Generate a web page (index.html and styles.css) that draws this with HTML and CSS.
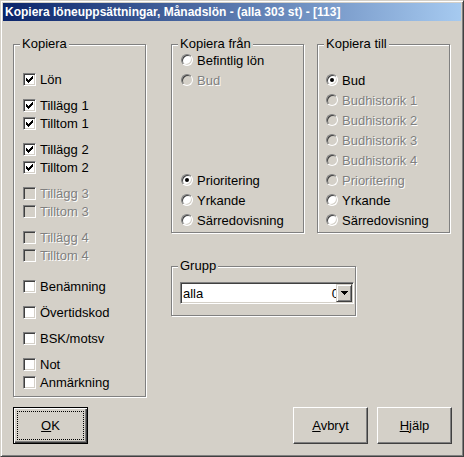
FILE: index.html
```html
<!DOCTYPE html>
<html lang="sv">
<head>
  <meta charset="UTF-8" />
  <title>Kopiera löneuppsättningar</title>
  <link rel="stylesheet" href="styles.css">
</head>
<body>
  <div class="window">
    <div class="titlebar">Kopiera löneuppsättningar, Månadslön - (alla 303 st) - [113]</div>
    <div class="dialog">
      <div class="groups">
        <fieldset class="group kopiera">
          <legend>Kopiera</legend>
          <div class="set">
            <label class="check"><span class="box"><svg width="7" height="7" viewBox="0 0 7 7"><path d="M0 2h1v3H0zM1 3h1v3H1zM2 4h1v3H2zM3 3h1v3H3zM4 2h1v3H4zM5 1h1v3H5zM6 0h1v3H6z"/></svg></span>Lön</label>
          </div>
          <div class="set">
            <label class="check"><span class="box"><svg width="7" height="7" viewBox="0 0 7 7"><path d="M0 2h1v3H0zM1 3h1v3H1zM2 4h1v3H2zM3 3h1v3H3zM4 2h1v3H4zM5 1h1v3H5zM6 0h1v3H6z"/></svg></span>Tillägg 1</label>
            <label class="check"><span class="box"><svg width="7" height="7" viewBox="0 0 7 7"><path d="M0 2h1v3H0zM1 3h1v3H1zM2 4h1v3H2zM3 3h1v3H3zM4 2h1v3H4zM5 1h1v3H5zM6 0h1v3H6z"/></svg></span>Tilltom 1</label>
          </div>
          <div class="set">
            <label class="check"><span class="box"><svg width="7" height="7" viewBox="0 0 7 7"><path d="M0 2h1v3H0zM1 3h1v3H1zM2 4h1v3H2zM3 3h1v3H3zM4 2h1v3H4zM5 1h1v3H5zM6 0h1v3H6z"/></svg></span>Tillägg 2</label>
            <label class="check"><span class="box"><svg width="7" height="7" viewBox="0 0 7 7"><path d="M0 2h1v3H0zM1 3h1v3H1zM2 4h1v3H2zM3 3h1v3H3zM4 2h1v3H4zM5 1h1v3H5zM6 0h1v3H6z"/></svg></span>Tilltom 2</label>
          </div>
          <div class="set">
            <label class="check disabled"><span class="box"></span>Tillägg 3</label>
            <label class="check disabled"><span class="box"></span>Tilltom 3</label>
          </div>
          <div class="set">
            <label class="check disabled"><span class="box"></span>Tillägg 4</label>
            <label class="check disabled"><span class="box"></span>Tilltom 4</label>
          </div>
          <div class="set spaced">
            <label class="check"><span class="box"></span>Benämning</label>
          </div>
          <div class="set">
            <label class="check"><span class="box"></span>Övertidskod</label>
          </div>
          <div class="set">
            <label class="check"><span class="box"></span>BSK/motsv</label>
          </div>
          <div class="set">
            <label class="check"><span class="box"></span>Not</label>
            <label class="check"><span class="box"></span>Anmärkning</label>
          </div>
        </fieldset>

        <div class="side">
          <div class="pair">
            <fieldset class="group fran">
              <legend>Kopiera från</legend>
              <div class="rows">
                <label class="radio"><span class="dot"></span>Befintlig lön</label>
                <label class="radio disabled"><span class="dot"></span>Bud</label>
              </div>
              <div class="rows later">
                <label class="radio"><span class="dot on"></span>Prioritering</label>
                <label class="radio"><span class="dot"></span>Yrkande</label>
                <label class="radio"><span class="dot"></span>Särredovisning</label>
              </div>
            </fieldset>
            <fieldset class="group till">
              <legend>Kopiera till</legend>
              <div class="rows">
                <label class="radio"><span class="dot on"></span>Bud</label>
                <label class="radio disabled"><span class="dot"></span>Budhistorik 1</label>
                <label class="radio disabled"><span class="dot"></span>Budhistorik 2</label>
                <label class="radio disabled"><span class="dot"></span>Budhistorik 3</label>
                <label class="radio disabled"><span class="dot"></span>Budhistorik 4</label>
                <label class="radio disabled"><span class="dot"></span>Prioritering</label>
                <label class="radio"><span class="dot"></span>Yrkande</label>
                <label class="radio"><span class="dot"></span>Särredovisning</label>
              </div>
            </fieldset>
          </div>

          <fieldset class="group grupp">
            <legend>Grupp</legend>
            <div class="combo">
              <div class="combo-text"><span>alla</span><span class="cut">0</span></div>
              <span class="combo-btn"><svg width="7" height="4" viewBox="0 0 7 4"><path d="M0 0h7v1H0zM1 1h5v1H1zM2 2h3v1H2zM3 3h1v1H3z"/></svg></span>
            </div>
          </fieldset>
        </div>
      </div>

      <div class="buttons">
        <button class="btn default"><span class="focus"><u>O</u>K</span></button>
        <button class="btn push-right"><u>A</u>vbryt</button>
        <button class="btn"><u>H</u>jälp</button>
      </div>
    </div>
  </div>
</body>
</html>
```

FILE: styles.css
```css
body {
  margin: 0;
  background: #d4d0c8;
  font-family: "Liberation Sans", Arial, sans-serif;
  font-size: 13px;
  color: #000;
}
.window {
  width: 464px;
  height: 457px;
  box-sizing: border-box;
  border: 1px solid;
  border-color: #d4d0c8 #404040 #404040 #d4d0c8;
  box-shadow: inset 1px 1px #fff, inset -1px -1px #808080;
  padding: 2px;
  background: #d4d0c8;
}
.titlebar {
  height: 18px;
  line-height: 18px;
  padding-left: 2px;
  background: linear-gradient(to right, #0a246a, #a6caf0);
  color: #fff;
  font-weight: bold;
  font-size: 12px;
  white-space: nowrap;
}
.dialog {
  padding: 16px 9px 0 10px;
}
.groups {
  display: flex;
  align-items: flex-start;
}
.group {
  margin: 0;
  padding: 0 0 0 9px;
  border: 1px solid #808080;
  box-shadow: inset 1px 1px #fff, 1px 1px #fff;
  box-sizing: border-box;
  width: 133px;
  min-width: 0;
}
.group legend {
  padding: 0 2px;
  margin-left: -3px;
  line-height: 14px;
  background: #d4d0c8;
}
.kopiera {
  height: 360px;
  padding-top: 19px;
}
.set + .set {
  margin-top: 8px;
}
.set.spaced {
  margin-top: 13px;
}
.check {
  display: flex;
  align-items: center;
  gap: 4px;
  height: 18px;
  white-space: nowrap;
}
.box {
  width: 13px;
  height: 13px;
  box-sizing: border-box;
  flex: none;
  display: flex;
  padding: 2px;
  border: 1px solid;
  border-color: #808080 #fff #fff #808080;
  box-shadow: inset 1px 1px #404040, inset -1px -1px #d4d0c8;
  background: #fff;
}
.box svg {
  display: block;
}
.disabled {
  color: #808080;
  text-shadow: 1px 1px 0 #fff;
}
.disabled .box,
.disabled .dot {
  background: #d4d0c8;
}

.side {
  margin-left: 25px;
}
.pair {
  display: flex;
  gap: 13px;
}
.pair .group {
  height: 196px;
}
.fran .rows:first-of-type {
  margin-top: -1px;
}
.fran .later {
  margin-top: 80px;
}
.till {
  padding-top: 19px;
}
.till .rows {
  margin-left: -1px;
}
.radio {
  display: flex;
  align-items: center;
  gap: 4px;
  height: 20px;
  white-space: nowrap;
}
.dot {
  width: 12px;
  height: 12px;
  box-sizing: border-box;
  flex: none;
  display: flex;
  align-items: center;
  justify-content: center;
  border-radius: 50%;
  border: 1px solid;
  border-color: #808080 #fff #fff #808080;
  box-shadow: inset 1px 1px #404040, inset -1px -1px #d4d0c8;
  background: #fff;
}
.dot.on::after {
  content: "";
  width: 4px;
  height: 4px;
  border-radius: 50%;
  background: #000;
}

.grupp {
  width: 185px;
  margin-top: 26px;
  padding-bottom: 11px;
}
.combo {
  margin: 9px 0 0 -1px;
  width: 174px;
  height: 22px;
  box-sizing: border-box;
  display: flex;
  border: 1px solid;
  border-color: #808080 #fff #fff #808080;
  padding: 1px;
  box-shadow: inset 1px 1px #404040, inset -1px -1px #d4d0c8;
  background: #fff;
}
.combo-text {
  flex: 1;
  display: flex;
  align-items: center;
  justify-content: space-between;
  overflow: hidden;
  padding-left: 1px;
}
.combo-text .cut {
  margin-right: -3px;
}
.combo-btn {
  width: 16px;
  height: 18px;
  box-sizing: border-box;
  display: flex;
  align-items: center;
  justify-content: center;
  border: 1px solid;
  border-color: #d4d0c8 #404040 #404040 #d4d0c8;
  box-shadow: inset 1px 1px #fff, inset -1px -1px #808080;
  background: #d4d0c8;
}
.combo-btn svg {
  display: block;
}

.buttons {
  display: flex;
  margin-top: 10px;
}
.btn {
  width: 75px;
  height: 37px;
  box-sizing: border-box;
  padding: 0;
  font-family: inherit;
  font-size: 13px;
  color: #000;
  background: #d4d0c8;
  border: 1px solid;
  border-color: #fff #404040 #404040 #fff;
  box-shadow: inset -1px -1px #808080;
}
.btn.default {
  border-color: #000;
  padding: 3px;
  box-shadow: inset 1px 1px #fff, inset -1px -1px #404040, inset -2px -2px #808080;
}
.focus {
  display: flex;
  align-items: center;
  justify-content: center;
  height: 100%;
  box-sizing: border-box;
  border: 1px dotted #000;
}
.push-right {
  margin-left: auto;
  margin-right: 9px;
}
```
